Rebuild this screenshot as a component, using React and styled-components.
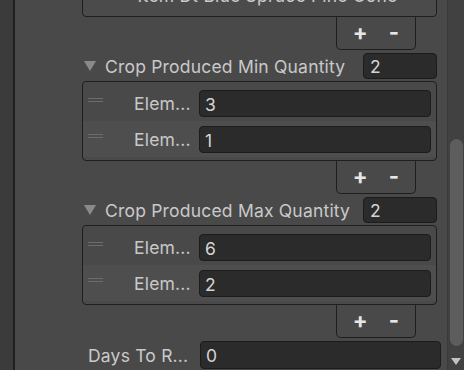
import React from 'react';
import styled, { createGlobalStyle } from 'styled-components';

const GlobalStyle = createGlobalStyle`
	html, body {
		margin: 0;
		padding: 0;
		background: #494949;
		font-family: Inter, "Noto Sans", sans-serif;
	}
`;

const lists = [
	{ title: 'Crop Produced Min Quantity', values: ['3', '1'] },
	{ title: 'Crop Produced Max Quantity', values: ['6', '2'] },
];

const App = () => (
	<Window>
		<GlobalStyle />
		<SideStrip />
		<Content>
			<ItemCard>Item Dt Blue Spruce Pine Cone</ItemCard>
			<FooterRow>
				<AddRemove>
					<span>+</span>
					<span>-</span>
				</AddRemove>
			</FooterRow>
			{lists.map(list => (
				<Section key={list.title}>
					<Header>
						<Foldout />
						<HeaderLabel>{list.title}</HeaderLabel>
						<SizeField>{list.values.length}</SizeField>
					</Header>
					<ListBox>
						{list.values.map((v, i) => (
							<ElementRow key={i} $alt={i % 2 === 1}>
								<Handle />
								<ElemLabel>Elem...</ElemLabel>
								<ValueField>{v}</ValueField>
							</ElementRow>
						))}
					</ListBox>
					<FooterRow>
						<AddRemove>
							<span>+</span>
							<span>-</span>
						</AddRemove>
					</FooterRow>
				</Section>
			))}
			<PropRow>
				<PropLabel>Days To R...</PropLabel>
				<PropField>0</PropField>
			</PropRow>
		</Content>
		<Scrollbar>
			<Thumb />
			<svg width="10" height="7" viewBox="0 0 10 7">
				<path d="M0 0 H10 L5 7 Z" fill="#c2c2c2" />
			</svg>
		</Scrollbar>
	</Window>
);

export default App;

// Styled components
const Window = styled.div`
	display: flex;
	width: 464px;
	height: 370px;
	overflow: hidden;
	background: #494949;
	color: #c9c9c9;
	font-size: 17.5px;
	letter-spacing: 0.2px;
`;

const SideStrip = styled.div`
	width: 13px;
	flex-shrink: 0;
	background: #3b3b3b;
	border-right: 2px solid #1f1f1f;
`;

const Content = styled.div`
	flex: 1;
	display: flex;
	flex-direction: column;
	padding-left: 67px;
	padding-right: 2px;
`;

const ItemCard = styled.div`
	height: 40px;
	margin: -23px 8px 0 0;
	box-sizing: border-box;
	display: flex;
	align-items: flex-end;
	justify-content: center;
	padding: 0 0 10px 16px;
	line-height: 20px;
	background: #4b4b4b;
	border: 1.5px solid #1e1e1e;
	border-radius: 0 0 4px 4px;
	color: #cbcbcb;
`;

const FooterRow = styled.div`
	display: flex;
	justify-content: flex-end;
	padding-right: 29px;
`;

const AddRemove = styled.div`
	width: 80px;
	height: 33px;
	box-sizing: border-box;
	display: flex;
	align-items: center;
	justify-content: center;
	gap: 21px;
	padding-bottom: 3px;
	border: 1.5px solid #1e1e1e;
	border-top: none;
	border-radius: 0 0 5px 5px;
	color: #e6e6e6;
	font-size: 22px;
	font-weight: 700;
`;

const Section = styled.div`
	display: flex;
	flex-direction: column;
	padding-top: 3px;
`;

const Header = styled.div`
	display: flex;
	align-items: center;
	height: 26px;
	margin-right: 8px;
	margin-bottom: 2px;
`;

const Foldout = styled.div`
	width: 0;
	height: 0;
	margin: 0 9px 0 2px;
	border-left: 6px solid transparent;
	border-right: 6px solid transparent;
	border-top: 10px solid #8a8a8a;
`;

const HeaderLabel = styled.div`
	flex: 1;
	white-space: nowrap;
`;

const SizeField = styled.div`
	width: 74px;
	height: 26px;
	box-sizing: border-box;
	padding-left: 6px;
	line-height: 26px;
	background: #2b2b2b;
	border: 1px solid #1c1c1c;
	border-radius: 4px;
	color: #d4d4d4;
`;

const ListBox = styled.div`
	margin-right: 8px;
	padding: 3px 0;
	border: 1.5px solid #1e1e1e;
	border-radius: 4px;
`;

const ElementRow = styled.div`
	position: relative;
	display: flex;
	align-items: center;
	height: 36px;
	padding-right: 5px;
	background: ${props => (props.$alt ? '#4e4e4e' : 'transparent')};
`;

const Handle = styled.div`
	position: absolute;
	left: 5px;
	top: 13px;
	width: 15px;
	height: 4px;
	border-top: 1px solid #6c6c6c;
	border-bottom: 1px solid #6c6c6c;
	box-sizing: border-box;
`;

const ElemLabel = styled.div`
	width: 116px;
	box-sizing: border-box;
	padding-left: 51px;
	white-space: nowrap;
`;

const ValueField = styled.div`
	flex: 1;
	height: 27px;
	box-sizing: border-box;
	padding-left: 5px;
	line-height: 27px;
	background: #2b2b2b;
	border: 1px solid #1c1c1c;
	border-radius: 4px;
	color: #d4d4d4;
`;

const PropRow = styled.div`
	display: flex;
	align-items: center;
	height: 28px;
	margin: 3px 4px 0 6px;
`;

const PropLabel = styled.div`
	width: 112px;
	white-space: nowrap;
`;

const PropField = styled(ValueField)`
	height: 28px;
	line-height: 28px;
`;

const Scrollbar = styled.div`
	width: 17px;
	flex-shrink: 0;
	display: flex;
	flex-direction: column;
	align-items: center;
	box-sizing: border-box;
	padding-top: 139px;
	background: #414141;
	border-left: 1px solid #3a3a3a;
	svg {
		margin-top: 12px;
	}
`;

const Thumb = styled.div`
	width: 13px;
	height: 207px;
	background: #5d5d5d;
	border-radius: 7px;
`;
